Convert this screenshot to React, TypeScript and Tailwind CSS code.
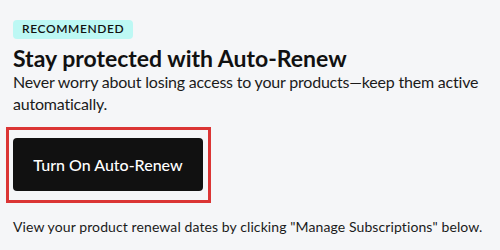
export default function App() {
  return (
    <div className="h-[250px] w-[500px] bg-[#f5f6f8] pl-[13px] pt-[15px] font-['Lato',sans-serif] text-[#111111]">
      {/* badge */}
      <div className="inline-flex h-[19px] items-center rounded-[4px] bg-[#bdf8f4] px-[9px] text-[12px] font-semibold tracking-[0.6px] text-[#111111]">
        RECOMMENDED
      </div>

      <h2 className="mt-[5px] text-[23px] font-bold leading-[28px]">Stay protected with Auto-Renew</h2>
      <p className="-mt-[1px] w-[482px] text-[16px] leading-[22px] tracking-[-0.2px] text-[#1b1b1b]">
        Never worry about losing access to your products—keep them active automatically.
      </p>

      {/* highlighted action */}
      <div className="-ml-[7px] mt-[12px] w-[205px] border-[3px] border-[#db3535] px-[4px] pb-[9px] pt-[8px]">
        <button className="flex h-[53px] w-[190px] items-center justify-center rounded-[4px] bg-[#111111] text-[16px] font-medium text-white">
          Turn On Auto-Renew
        </button>
      </div>

      <p className="mt-[14px] text-[14px] tracking-[0.1px] leading-[20px] text-[#1b1b1b]">
        View your product renewal dates by clicking "Manage Subscriptions" below.
      </p>
    </div>
  )
}
